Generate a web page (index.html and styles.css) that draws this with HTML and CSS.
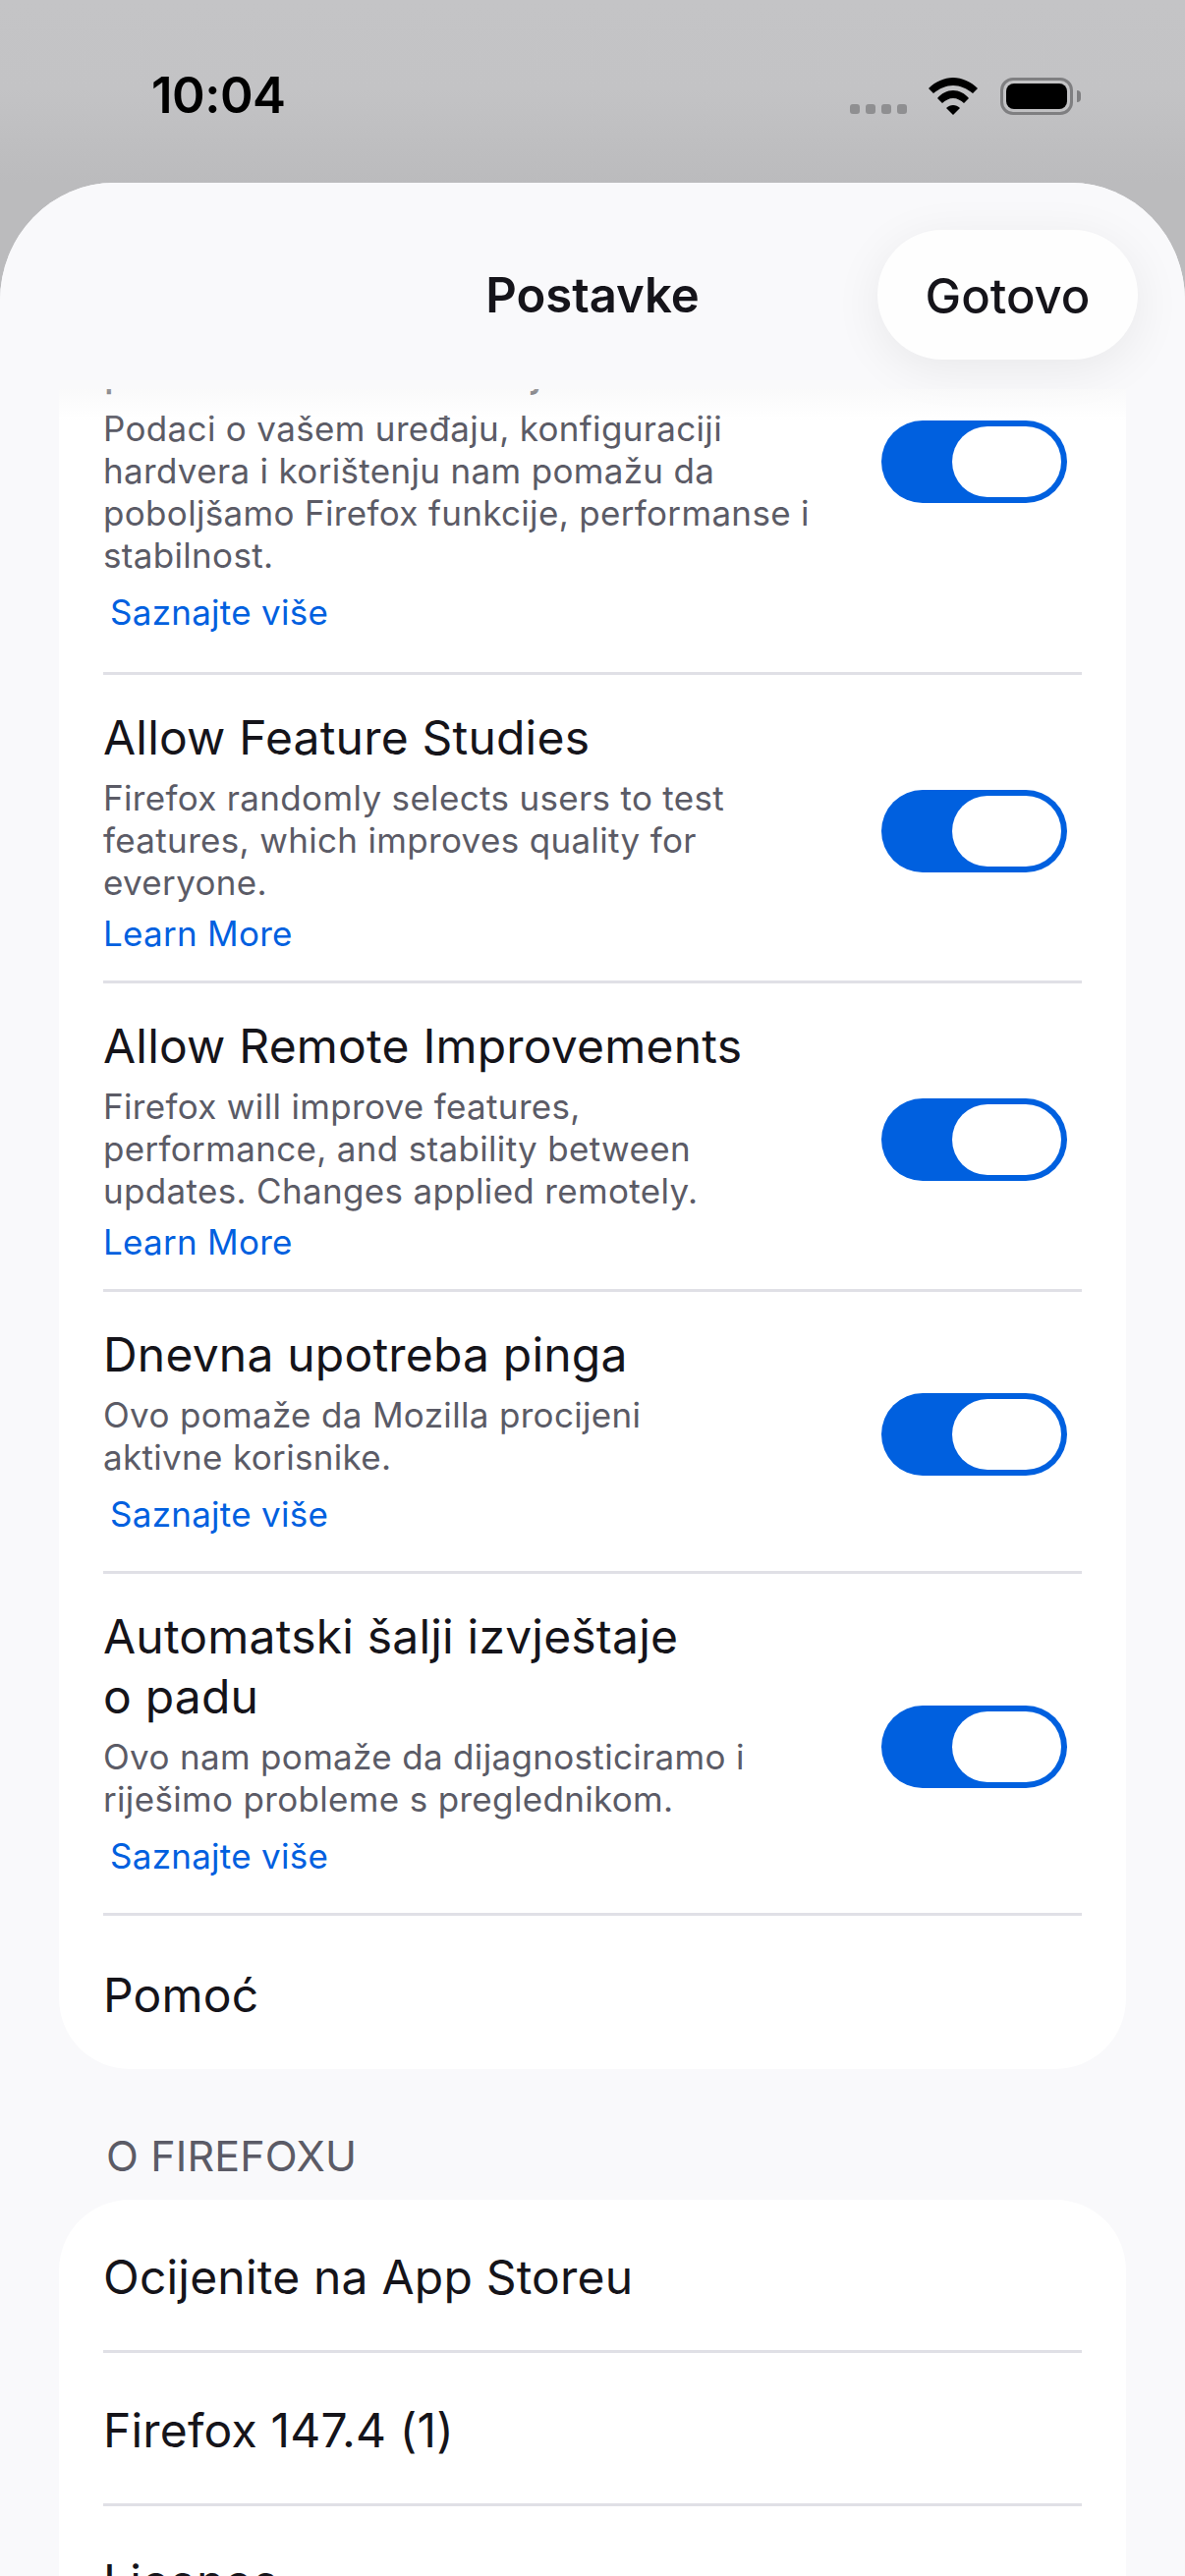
FILE: index.html
```html
<!DOCTYPE html>
<html lang="bs">
<head>
<meta charset="utf-8">
<title>Postavke</title>
<link rel="stylesheet" href="styles.css">
</head>
<body>
<div class="screen">
  <div class="status">
    <span class="time">10:04</span>
    <div class="status-icons">
      <div class="signal"><i></i><i></i><i></i><i></i></div>
      <svg class="wifi" viewBox="0 0 50 38" width="50" height="38"><path d="M0 11C7 4 16 0 25 0C34 0 43 4 50 11L45 16C39 11 32 8 25 8C18 8 11 11 5 16Z"/><path d="M9 21C13 16 19 13 25 13C31 13 37 16 41 21L36 26C33 23 29 21 25 21C21 21 17 23 14 26Z"/><path d="M18 31C20 29 22.5 28 25 28C27.5 28 30 29 32 31L25 38Z"/></svg>
      <div class="battery"><div class="battery-fill"></div></div>
      <div class="battery-nub"></div>
    </div>
  </div>
  <div class="sheet">
    <header class="nav">
      <h1 class="nav-title">Postavke</h1>
      <button class="done">Gotovo</button>
    </header>
    <section class="card">
      <div class="row row-first">
        <div class="row-text">
          <div class="title">Šalji tehničke podatke i podatke o interakciji</div>
          <p class="desc">Podaci o vašem uređaju, konfiguraciji hardvera i korištenju nam pomažu da poboljšamo Firefox funkcije, performanse i stabilnost.</p>
          <a class="link link-inset">Saznajte više</a>
        </div>
        <div class="toggle"><div class="thumb"></div></div>
      </div>
      <div class="row">
        <div class="row-text">
          <div class="title">Allow Feature Studies</div>
          <p class="desc">Firefox randomly selects users to test features, which improves quality for everyone.</p>
          <a class="link">Learn More</a>
        </div>
        <div class="toggle"><div class="thumb"></div></div>
      </div>
      <div class="row">
        <div class="row-text">
          <div class="title">Allow Remote Improvements</div>
          <p class="desc">Firefox will improve features,<br>performance, and stability between updates. Changes applied remotely.</p>
          <a class="link">Learn More</a>
        </div>
        <div class="toggle"><div class="thumb"></div></div>
      </div>
      <div class="row">
        <div class="row-text">
          <div class="title">Dnevna upotreba pinga</div>
          <p class="desc">Ovo pomaže da Mozilla procijeni<br>aktivne korisnike.</p>
          <a class="link link-inset">Saznajte više</a>
        </div>
        <div class="toggle"><div class="thumb"></div></div>
      </div>
      <div class="row">
        <div class="row-text">
          <div class="title">Automatski šalji izvještaje<br>o padu</div>
          <p class="desc">Ovo nam pomaže da dijagnosticiramo i riješimo probleme s preglednikom.</p>
          <a class="link link-inset">Saznajte više</a>
        </div>
        <div class="toggle"><div class="thumb"></div></div>
      </div>
      <div class="row-plain row-last">Pomoć</div>
    </section>
    <h2 class="section-label">O FIREFOXU</h2>
    <section class="card">
      <div class="row-plain">Ocijenite na App Storeu</div>
      <div class="row-plain">Firefox 147.4 (1)</div>
      <div class="row-plain row-last row-tail">Licence</div>
    </section>
  </div>
</div>
</body>
</html>
```

FILE: styles.css
```css
* { box-sizing: border-box; }
html, body { margin: 0; padding: 0; }
body { font-family: Inter, "Noto Sans", sans-serif; color: #15141a; }
.screen {
  width: 1206px;
  height: 2622px;
  overflow: hidden;
  display: flex;
  flex-direction: column;
  background: linear-gradient(#c4c4c6, #c3c3c5 90px, #bbbbbd 186px);
}
.status {
  height: 186px;
  flex: none;
  display: flex;
  justify-content: space-between;
  padding: 66px 106px 0 154px;
}
.time { font-size: 51px; font-weight: 600; line-height: 62px; color: #000; letter-spacing: -0.5px; }
.status-icons { display: flex; align-items: flex-end; height: 50px; }
.signal { display: flex; gap: 6px; margin-right: 22px; }
.signal i { display: block; width: 10px; height: 10px; border-radius: 3px; background: #8f8f91; }
.wifi { display: block; fill: #000; margin-right: 23px; margin-bottom: -1px; }
.battery { width: 74px; height: 38px; border: 3px solid #7f7f81; border-radius: 13px; padding: 3px; margin-bottom: -1px; }
.battery-fill { width: 100%; height: 100%; background: #000; border-radius: 8px; }
.battery-nub { width: 4px; height: 12px; background: #7f7f81; border-radius: 0 4px 4px 0; margin: 0 0 12px 4px; }
.sheet {
  position: relative;
  flex: 1;
  overflow: hidden;
  background: #f9f9fb;
  border-radius: 116px 116px 0 0 / 120px 120px 0 0;
  padding: 64px 60px 0;
}
.nav {
  position: absolute;
  left: 0;
  right: 0;
  top: 0;
  height: 210px;
  z-index: 2;
  background: #f9f9fb;
}
.nav::after {
  content: "";
  position: absolute;
  left: 60px;
  right: 60px;
  top: 100%;
  height: 32px;
  background: linear-gradient(rgba(246, 246, 247, 0.6), rgba(255, 255, 255, 0));
}
.nav-title {
  margin: 0;
  text-align: center;
  padding-top: 85px;
  font-size: 49px;
  line-height: 60px;
  font-weight: 600;
}
.done {
  position: absolute;
  top: 48px;
  left: 893px;
  width: 265px;
  height: 132px;
  border: 0;
  border-radius: 66px;
  background: #fefefe;
  padding: 3px 0 0;
  font: 500 49px/60px Inter, "Noto Sans", sans-serif;
  color: #15141a;
  box-shadow: 0 10px 50px rgba(0, 0, 0, 0.07);
}
.card {
  background: #fff;
  border-radius: 72px;
  padding: 0 45px;
  overflow: hidden;
}
.row {
  display: flex;
  align-items: center;
  justify-content: space-between;
  border-bottom: 3px solid #e0e0e6;
  padding-right: 15px;
}
.row-text { width: 722px; padding: 33px 0 26px; }
.row-first .row-text { padding-bottom: 29px; }
.title { font-size: 48px; line-height: 61px; letter-spacing: 0.2px; }
.desc { margin: 10px 0 0; font-size: 35px; line-height: 43px; color: #5b5b66; letter-spacing: 0.33px; }
.link { display: block; margin-top: 9px; font-size: 35px; line-height: 43px; color: #0060df; letter-spacing: 0.27px; }
.link-inset { margin: 15px 0 10px; padding-left: 7px; }
.toggle {
  flex: none;
  width: 189px;
  height: 84px;
  margin-top: 6px;
  border-radius: 42px;
  background: #0060df;
  padding: 6px;
  display: flex;
  justify-content: flex-end;
}
.thumb { width: 111px; height: 72px; border-radius: 36px; background: #fff; }
.row-plain {
  height: 156px;
  padding-top: 4px;
  display: flex;
  align-items: center;
  font-size: 48px;
  letter-spacing: 0.2px;
  border-bottom: 3px solid #e0e0e6;
}
.row-last { border-bottom: 0; }
.row-tail { padding: 0 0 4px; }
.section-label {
  margin: 0;
  padding: 63px 0 20px 48px;
  font-size: 43px;
  line-height: 50px;
  font-weight: 400;
  letter-spacing: 0.15px;
  color: #5b5b66;
}
```
